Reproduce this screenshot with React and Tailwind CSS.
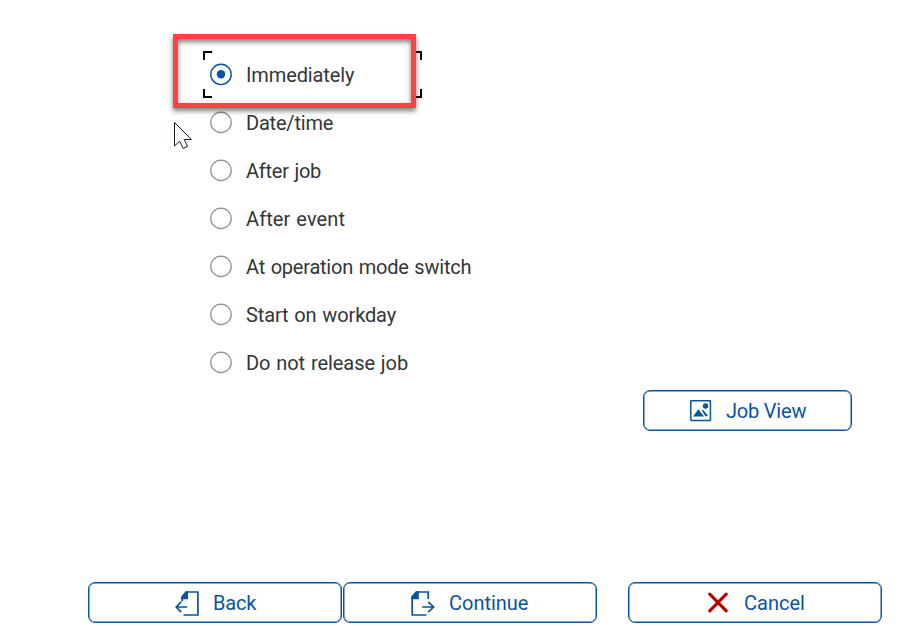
const options = [
  { label: 'Immediately', spacing: 'tracking-[-0.12px]' },
  { label: 'Date/time', spacing: 'tracking-[-0.2px]' },
  { label: 'After job', spacing: 'tracking-[-0.25px] [word-spacing:1px]' },
  { label: 'After event', spacing: 'tracking-[0.08px] [word-spacing:1px]' },
  { label: 'At operation mode switch', spacing: 'tracking-[-0.23px] [word-spacing:1px]' },
  { label: 'Start on workday', spacing: 'tracking-[-0.13px] [word-spacing:1px]' },
  { label: 'Do not release job', spacing: 'tracking-[-0.07px] [word-spacing:1px]' },
];

function Radio({ checked }) {
  return (
    <svg className="h-6 w-6 shrink-0" viewBox="0 0 24 24" fill="none">
      <circle cx="12" cy="11.4" r="10.2" stroke={checked ? '#0854a0' : '#89919a'} strokeWidth={checked ? 1.4 : 1.2} />
      {checked && <circle cx="12" cy="11.2" r="4.2" fill="#0854a0" />}
    </svg>
  );
}

function ImageIcon() {
  return (
    <svg className="h-[23px] w-[23px]" viewBox="0 0 23 23" fill="none">
      <rect x="1.8" y="1.8" width="19.6" height="19.6" rx="0.4" stroke="#0854a0" strokeWidth="1.5" />
      <path d="M4 17.6 9.4 10.3 15 17.6Z" fill="#0854a0" />
      <path d="M12.8 11.6 14 10.8 19 16.8 16.6 17.4Z" fill="#0854a0" />
      <circle cx="16.5" cy="7" r="2.7" fill="#0854a0" />
    </svg>
  );
}

function BackIcon() {
  return (
    <svg className="h-7 w-7" viewBox="0 0 28 28" fill="none" stroke="#0854a0" strokeWidth="1.7">
      <path d="M11 3H22.9V26H8.5" />
      <path d="M10.6 2.2H13V10.2H6V7.8Z" fill="#0854a0" stroke="none" />
      <path d="M7.2 8.2V12.4" />
      <path d="M12.2 18H1.8M6.2 12.9 1.2 18 6.2 23.1" />
    </svg>
  );
}

function ContinueIcon() {
  return (
    <svg className="h-7 w-7" viewBox="0 0 28 28" fill="none" stroke="#0854a0" strokeWidth="1.7">
      <path d="M19.2 9.9V3H7.3L3.2 8.1V26H17.5" />
      <path d="M7.2 2.2H9.8V10.2H2.4V7.6Z" fill="#0854a0" stroke="none" />
      <path d="M13.2 18H24.5M19.3 12.9 24.6 18 19.3 23.1" />
    </svg>
  );
}

function CancelIcon() {
  return (
    <svg className="h-[22px] w-[22px]" viewBox="0 0 22 22" fill="none" stroke="#bb0000" strokeWidth="3.2" strokeLinecap="round">
      <path d="M2.8 2.2 19.2 18.8M19.2 2.2 2.8 18.8" />
    </svg>
  );
}

const buttonBase =
  'flex h-[41px] items-center rounded-[7px] border border-[#0854a0] bg-white text-[20px] leading-none whitespace-nowrap text-[#0854a0] shadow-[inset_0_0_0_0.5px_#0854a0]';

export default function App() {
  return (
    <main className="relative h-[626px] w-[910px] overflow-hidden bg-white pt-[51px] font-[Roboto,sans-serif]">
      <div role="radiogroup" className="ml-[203px] w-[219px]">
        {options.map((option, i) => (
          <div key={option.label} className="relative flex h-12 items-center gap-[13px] pl-[6px] text-[20px] text-[#32363a]">
            {i === 0 && (
              <svg className="absolute top-0 left-0 h-[47px] w-[219px]" viewBox="0 0 219 47" fill="none" stroke="#000" strokeWidth="2">
                <path d="M1 9V1H9M210 1H218V9M218 38V46H210M9 46H1V38" />
              </svg>
            )}
            <Radio checked={i === 0} />
            <span className={`whitespace-nowrap ${option.spacing}`}>{option.label}</span>
          </div>
        ))}
      </div>

      <button className={`${buttonBase} mt-[3px] ml-[643px] w-[209px] pl-[45px]`}>
        <ImageIcon />
        <span className="ml-[14px] tracking-[-0.2px]">Job View</span>
      </button>

      <div className="mt-[151px] ml-[88px] flex">
        <button className={`${buttonBase} w-[254px] pl-[86px]`}>
          <BackIcon />
          <span className="ml-[10px] tracking-[-0.2px]">Back</span>
        </button>
        <button className={`${buttonBase} ml-[1px] w-[254px] pl-[65px]`}>
          <ContinueIcon />
          <span className="ml-[12px] tracking-[-0.02px]">Continue</span>
        </button>
        <button className={`${buttonBase} ml-[31px] w-[254px] pl-[78px]`}>
          <CancelIcon />
          <span className="ml-[15px]">Cancel</span>
        </button>
      </div>

      <div className="absolute top-[34px] left-[173px] h-[74px] w-[243px] border-[5px] border-[#ff4343] shadow-[0_3px_5px_rgba(0,0,0,0.5),inset_0_3px_5px_rgba(0,0,0,0.5)]" />
      <svg className="absolute top-[121px] left-[173px] h-[30px] w-[20px]" viewBox="0 0 20 30" fill="#fff" stroke="#111827" strokeWidth="1">
        <path d="M1.5 1.5V25L6.7 20.2 10.2 27.5 14.6 25.4 11.2 18.5H18.4Z" />
      </svg>
    </main>
  );
}
